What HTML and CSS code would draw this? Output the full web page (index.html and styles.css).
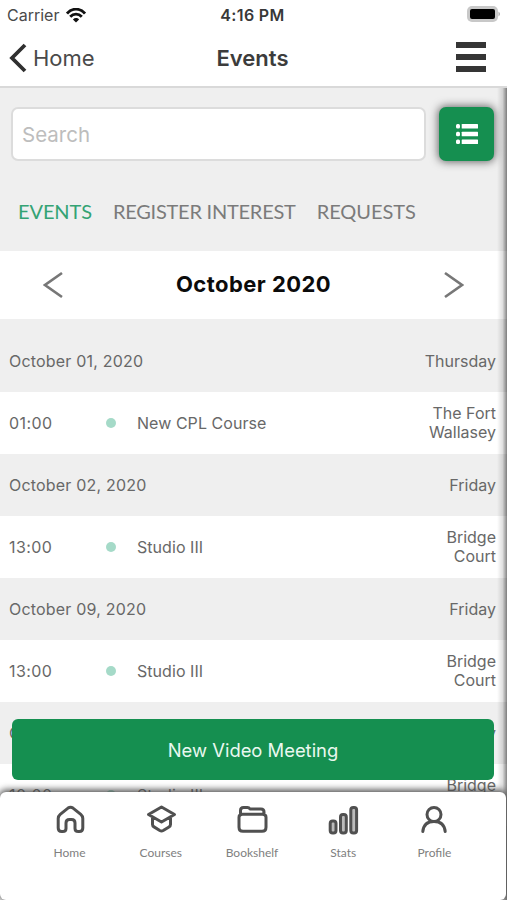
FILE: index.html
```html
<!DOCTYPE html>
<html lang="en">
<head>
<meta charset="utf-8">
<title>Events</title>
<link rel="stylesheet" href="styles.css">
</head>
<body>
<div class="app">
  <header class="top">
    <div class="status">
      <div class="carrier"><span>Carrier</span>
        <svg width="20" height="15" viewBox="0 0 20 15" fill="none" stroke="#111" stroke-width="2.8"><path d="M1 5.500C6-.3 14-.3 19 5.500M4.200 8.800c3.400-3.700 8.200-3.700 11.600 0"/><path d="M6.900 11.400c1.800-1.900 4.400-1.900 6.200 0L10 14.600z" fill="#111" stroke="none"/></svg>
      </div>
      <div class="clock">4:16 PM</div>
      <svg class="battery" width="34" height="16" viewBox="0 0 34 16"><rect width="31" height="16" rx="5" fill="#c8c8c8"/><rect x="3" y="3" width="25" height="10" rx="2"/><path d="M31.500 5.500q3 2.500 0 5z" fill="#aaa"/></svg>
    </div>
    <nav class="nav">
      <div class="back"><svg width="18" height="30" viewBox="0 0 18 30" fill="none" stroke="#303030" stroke-width="3.8"><path d="M16 2 3 15l13 13"/></svg><span>Home</span></div>
      <h1>Events</h1>
      <div class="menu"><i></i><i></i><i></i></div>
    </nav>
  </header>
  <main class="content">
    <div class="search-row">
      <div class="search"><span>Search</span></div>
      <div class="list-button"><svg width="22" height="20" viewBox="0 0 22 20" fill="#fff"><rect width="4" height="4.600" rx="1.500"/><rect x="5.700" width="16.300" height="4.600" rx=".6"/><rect y="7.700" width="4" height="4.600" rx="1.500"/><rect x="5.700" y="7.700" width="16.300" height="4.600" rx=".6"/><rect y="15.400" width="4" height="4.600" rx="1.500"/><rect x="5.700" y="15.400" width="16.300" height="4.600" rx=".6"/></svg></div>
    </div>
    <div class="tabs"><span class="tab tab-events">EVENTS</span><span class="tab tab-register">REGISTER INTEREST</span><span class="tab tab-requests">REQUESTS</span></div>
    <div class="month">
      <svg width="20" height="28" viewBox="0 0 20 28" fill="none" stroke="#777" stroke-width="2.700"><path d="M19 2 2 14l17 12"/></svg>
      <h2>October 2020</h2>
      <svg width="20" height="28" viewBox="0 0 20 28" fill="none" stroke="#777" stroke-width="2.700"><path d="m1 2 17 12L1 26"/></svg>
    </div>
    <div class="day first"><span class="date">October 01, 2020</span><span>Thursday</span></div>
    <div class="event"><span class="time">01:00</span><i class="dot"></i><span class="title">New CPL Course</span><span class="place">The Fort<br>Wallasey</span></div>
    <div class="day"><span class="date">October 02, 2020</span><span>Friday</span></div>
    <div class="event"><span class="time">13:00</span><i class="dot"></i><span class="title">Studio III</span><span class="place">Bridge<br>Court</span></div>
    <div class="day"><span class="date">October 09, 2020</span><span>Friday</span></div>
    <div class="event"><span class="time">13:00</span><i class="dot"></i><span class="title">Studio III</span><span class="place">Bridge<br>Court</span></div>
    <div class="day"><span class="date">October 16, 2020</span><span>Friday</span></div>
    <div class="event"><span class="time">10:00</span><i class="dot"></i><span class="title">Studio III</span><span class="place">Bridge<br>Court</span></div>
  </main>
  <div class="edge"></div>
  <div class="meeting">New Video Meeting</div>
  <footer class="tabbar">
    <div class="item"><svg width="32" height="32" viewBox="0 0 32 32"><path d="M4.200 15.500q0-2.500 2-4.200l7.800-6.200q2.500-1.700 5 0l7.800 6.200q2 1.700 2 4.200V25q0 3.500-3.500 3.500h-1Q21 28.500 21 25.500V20q0-3.500-3.500-3.500h-2Q12 16.500 12 20v5.500q0 3-3.300 3h-1q-3.500 0-3.500-3.500z"/></svg><span>Home</span></div>
    <div class="item"><svg width="32" height="32" viewBox="0 0 32 32"><path d="M3.500 11.500 16.500 4l13 7.500-13 7.500zM7.500 15v6.500q0 1.500 1.500 2.400l5.800 3.600q1.700 1 3.400 0l5.800-3.600q1.500-.9 1.500-2.400V15"/></svg><span>Courses</span></div>
    <div class="item"><svg width="32" height="32" viewBox="0 0 32 32"><path d="M4.500 10.500V7.500q0-3 3-3h4q1.500 0 2.500 1.500h11q3 0 3 3v2M6.500 11.200h20q3.500 0 3.500 3v10q0 4-4 4H7q-4 0-4-4v-10q0-3 3.500-3z"/></svg><span>Bookshelf</span></div>
    <div class="item"><svg width="32" height="32" viewBox="0 0 32 32"><g fill="#bbb"><rect x="3.200" y="18" width="5.800" height="12" rx="2.500"/><rect x="13.500" y="11.500" width="5.800" height="18.500" rx="2.500"/><rect x="23.800" y="4.500" width="5.800" height="25.500" rx="2.500"/></g></svg><span>Stats</span></div>
    <div class="item"><svg width="32" height="32" viewBox="0 0 32 32"><circle cx="16" cy="11.500" r="7"/><path d="M4.800 28.500q1-10 11.200-10t11.200 10"/></svg><span>Profile</span></div>
  </footer>
</div>
</body>
</html>
```
FILE: styles.css
```css
* { box-sizing: border-box; }
body { margin: 0; font-family: Inter, "Liberation Sans", sans-serif; color: #6c6c6c; }
h1, h2 { margin: 0; }
svg { display: block; flex: none; }
.app { position: relative; height: 900px; overflow: hidden; background: #efefef; }
.top { height: 88px; background: #fff; border-bottom: 2px solid #d9d9d9; }
.status { height: 30px; display: grid; grid-template-columns: 1fr auto 1fr; align-items: center; padding: 0 6px 0 7px; color: #4a4a4a; font-size: 16px; }
.carrier { display: flex; align-items: center; gap: 7px; }
.clock { font-weight: 600; color: #383838; font-size: 16px; letter-spacing: .35px; margin-right: 3px; }
.battery { justify-self: end; margin-top: -2px; }
.nav { height: 56px; display: grid; grid-template-columns: 1fr auto 1fr; align-items: center; padding: 0 21px 0 9px; color: #4a4a4a; }
.back { display: flex; align-items: center; gap: 6px; font-size: 22px; }
.nav h1 { font-size: 22px; font-weight: 600; color: #3c3c3c; margin: 0 1px 0 11px; }
.menu { justify-self: end; width: 30px; display: grid; gap: 6px; margin-top: -2px; }
.menu i { height: 6px; background: #353535; }
.search-row { display: flex; gap: 13px; padding: 19px 13px 0 11px; }
.search { flex: 1; height: 54px; border: 2px solid #dcdcdc; border-radius: 7px; background: #fff; display: flex; align-items: center; padding-left: 9px; font-size: 20.5px; color: #bdbdbd; }
.list-button { width: 55px; height: 54px; border-radius: 7px; background: #158f50; display: flex; align-items: center; justify-content: center; box-shadow: 0 0 8px 1px #666; }
.tabs { height: 90px; padding: 10px 18px 0; display: flex; align-items: center; gap: 21px; font-family: Lato, sans-serif; font-size: 20px; color: #7b7b7b; white-space: nowrap; }
.tab-register { letter-spacing: -.24px; }
.tab-requests { letter-spacing: -.05px; }
.tab-events { color: #34a374; letter-spacing: -.1px; }
.month { height: 68px; background: #fff; display: flex; align-items: center; justify-content: space-between; padding: 0 43px 0 43px; }
.month h2 { font-size: 22px; font-weight: 700; color: #0b0b0b; letter-spacing: .45px; margin-top: -2px; }
.day, .event { height: 62px; display: flex; align-items: center; padding: 0 11px 0 9px; font-size: 16px; line-height: 19px; color: #686868; }
.day { justify-content: space-between; }
.date { letter-spacing: .2px; }
.day.first { height: 73px; padding-top: 11px; }
.event { background: #fff; }
.time { width: 97px; letter-spacing: .4px; }
.dot { width: 10px; height: 10px; border-radius: 50%; background: #a5dac8; margin-right: 21px; }
.title { letter-spacing: .05px; }
.place { margin-left: auto; text-align: right; }
.edge { position: absolute; top: 88px; right: 0; bottom: 0; width: 10px; background: linear-gradient(to right, rgba(0,0,0,0), rgba(0,0,0,.12) 55%, rgba(0,0,0,.48)); }
.meeting { position: absolute; left: 12px; top: 719px; width: 482px; height: 61px; border-radius: 6px; background: #158f50; color: #e9f8ef; font-size: 18.4px; display: flex; align-items: center; justify-content: center; }
.tabbar { position: absolute; left: 0; right: 1px; bottom: 0; height: 108px; border-radius: 6px; background: #fff; display: flex; padding: 11px 26px 0 24px; box-shadow: 0 -1px 7px 1px #444; }
.item { flex: 1; display: flex; flex-direction: column; align-items: center; gap: 11px; font-family: Lato, sans-serif; font-size: 12px; line-height: 14px; color: #808080; }
.item svg { fill: none; stroke: #505050; stroke-width: 3; stroke-linejoin: round; stroke-linecap: round; }
```
